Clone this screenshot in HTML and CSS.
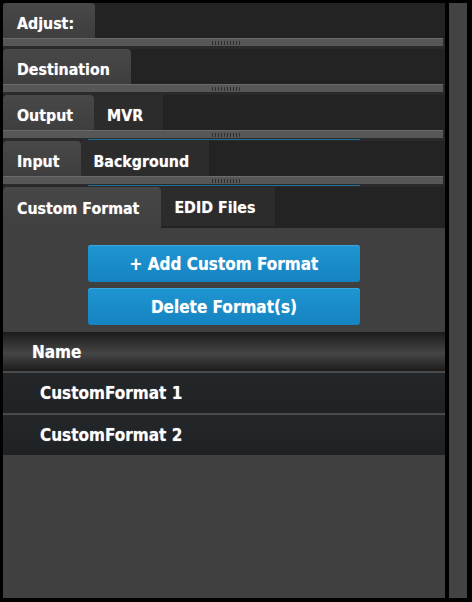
FILE: index.html
```html
<!DOCTYPE html>
<html lang="en">
<head>
    <meta charset="UTF-8">
    <meta name="viewport" content="width=device-width, initial-scale=1.0">
    <title>Formats</title>
    <link rel="stylesheet" href="styles.css">
</head>
<body>
    <div class="frame">
        <div class="panel">
            <!-- collapsed sections -->
            <div class="tabbar">
                <div class="tab active">Adjust:</div>
            </div>
            <div class="splitter"><span class="grip"></span></div>
            <div class="gap"></div>

            <div class="tabbar">
                <div class="tab active">Destination</div>
            </div>
            <div class="splitter"><span class="grip"></span></div>
            <div class="gap"></div>

            <div class="tabbar">
                <div class="tab active">Output</div>
                <div class="tab">MVR</div>
            </div>
            <div class="splitter"><span class="grip"></span></div>
            <div class="gap"><span class="edge"></span></div>

            <div class="tabbar">
                <div class="tab active">Input</div>
                <div class="tab">Background</div>
            </div>
            <div class="splitter"><span class="grip"></span></div>
            <div class="gap"><span class="edge"></span></div>

            <!-- open section -->
            <div class="tabbar tall">
                <div class="tab active">Custom Format</div>
                <div class="tab">EDID Files</div>
            </div>
            <div class="content">
                <div class="actions">
                    <button class="btn">+ Add Custom Format</button>
                    <button class="btn">Delete Format(s)</button>
                </div>
                <div class="grid">
                    <div class="grid-head">Name</div>
                    <div class="grid-row">CustomFormat 1</div>
                    <div class="grid-row">CustomFormat 2</div>
                </div>
            </div>
        </div>
        <div class="scrollbar"></div>
    </div>
</body>
</html>
```

FILE: styles.css
```css
html, body {
    margin: 0;
    background: #000;
}
body {
    font-family: "DejaVu Sans Condensed", "DejaVu Sans", Verdana, sans-serif;
    font-stretch: condensed;
    font-weight: bold;
    color: #fff;
    text-shadow: 0 0 1px rgba(255, 255, 255, 0.5);
}
.frame {
    display: flex;
    gap: 4px;
    width: 472px;
    height: 602px;
    padding: 3px 5px 4px 3px;
    box-sizing: border-box;
}
.panel {
    width: 442px;
    display: flex;
    flex-direction: column;
    background: #2a2a2a;
}
.scrollbar {
    width: 18px;
    background: #434343;
}
.tabbar {
    display: flex;
    height: 35px;
    background: #232323;
}
.tabbar.tall {
    height: 41px;
}
.tab {
    display: flex;
    align-items: center;
    padding: 5px 20px 0 13px;
    box-sizing: border-box;
    font-size: 15.8px;
    background: #2c2c2c;
}
.tabbar.tall .tab {
    height: 39px;
    padding-top: 1px;
}
.tab.active {
    background: linear-gradient(#484848, #3e3e3e);
    border-radius: 4px 4px 0 0;
    padding-left: 14px;
    padding-right: 21px;
}
.tabbar.tall .tab.active {
    height: 41px;
    padding-right: 22px;
    background: linear-gradient(#474747, #404040);
}
.splitter {
    height: 8px;
    margin-right: 2px;
    background: #575757;
    border-top: 1px solid #6a6a6a;
    box-sizing: border-box;
    display: flex;
    justify-content: center;
    align-items: center;
}
.grip {
    width: 28px;
    height: 4px;
    margin-left: 6px;
    background: repeating-linear-gradient(90deg, #2e2e2e 0 1px, transparent 1px 3px);
}
.gap {
    height: 3px;
    background: #2a2a2a;
    display: flex;
    justify-content: center;
    align-items: flex-end;
}
.edge {
    width: 272px;
    height: 1px;
    margin-bottom: 1px;
    background: #1f6f9b;
}
.content {
    flex: 1;
    background: #404040;
    padding-top: 17px;
}
.actions {
    display: flex;
    flex-direction: column;
    align-items: center;
    gap: 6px;
}
.btn {
    width: 272px;
    height: 37px;
    border: none;
    border-radius: 3px;
    background: linear-gradient(#1f95d2, #1583c1);
    box-shadow: inset 0 1px 0 #3aa6de;
    color: #fff;
    font-family: inherit;
    font-stretch: inherit;
    font-weight: bold;
    font-size: 17px;
    text-shadow: inherit;
}
.grid {
    margin-top: 7px;
}
.grid-head {
    height: 39px;
    display: flex;
    align-items: center;
    padding-left: 29px;
    font-size: 17px;
    background: linear-gradient(#1b1b1b, #3a3a3a 40%, #454545 55%, #2a2a2a 85%, #1b1b1b);
}
.grid-row {
    height: 40px;
    display: flex;
    align-items: center;
    padding-left: 37px;
    font-size: 17px;
    border-top: 2px solid #4a4a4a;
    background: linear-gradient(#232729, #1f2224);
}
```
